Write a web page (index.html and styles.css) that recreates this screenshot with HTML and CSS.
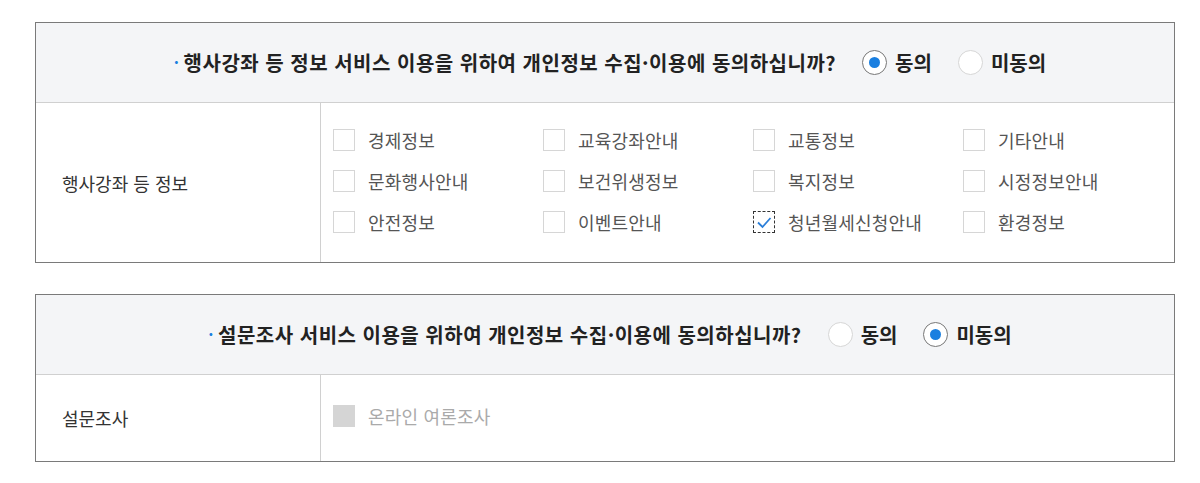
FILE: index.html
```html
<!DOCTYPE html>
<html lang="ko">
<head>
<meta charset="utf-8">
<link rel="stylesheet" href="styles.css">
</head>
<body>
<div class="page">
  <section class="agree">
    <div class="agree-head">
      <p class="question"><span class="dot">·</span>행사강좌 등 정보 서비스 이용을 위하여 개인정보 수집·이용에 동의하십니까?</p>
      <label class="radio"><span class="circle on"></span>동의</label>
      <label class="radio"><span class="circle"></span>미동의</label>
    </div>
    <div class="agree-body">
      <div class="label">행사강좌 등 정보</div>
      <div class="options">
        <label class="check"><span class="box"></span>경제정보</label>
        <label class="check"><span class="box"></span>교육강좌안내</label>
        <label class="check"><span class="box"></span>교통정보</label>
        <label class="check"><span class="box"></span>기타안내</label>
        <label class="check"><span class="box"></span>문화행사안내</label>
        <label class="check"><span class="box"></span>보건위생정보</label>
        <label class="check"><span class="box"></span>복지정보</label>
        <label class="check"><span class="box"></span>시정정보안내</label>
        <label class="check"><span class="box"></span>안전정보</label>
        <label class="check"><span class="box"></span>이벤트안내</label>
        <label class="check"><span class="box checked"><svg viewBox="0 0 22 22" width="22" height="22"><path d="M5 11.5 L9.5 16 L17.5 7" fill="none" stroke="#2b7fd9" stroke-width="1.8"/></svg></span>청년월세신청안내</label>
        <label class="check"><span class="box"></span>환경정보</label>
      </div>
    </div>
  </section>

  <section class="agree">
    <div class="agree-head">
      <p class="question"><span class="dot">·</span>설문조사 서비스 이용을 위하여 개인정보 수집·이용에 동의하십니까?</p>
      <label class="radio"><span class="circle"></span>동의</label>
      <label class="radio"><span class="circle on"></span>미동의</label>
    </div>
    <div class="agree-body short">
      <div class="label">설문조사</div>
      <div class="options single">
        <label class="check disabled"><span class="box"></span>온라인 여론조사</label>
      </div>
    </div>
  </section>
</div>
</body>
</html>
```

FILE: styles.css
```css
* { box-sizing: border-box; }
html, body { margin: 0; padding: 0; background: #fff; }
body {
  font-family: "Noto Sans CJK KR", "Noto Sans", sans-serif;
  color: #333;
}
.page {
  padding: 22px 25px 0 35px;
  width: 1200px;
}
.agree {
  width: 1140px;
  border: 1px solid #7a7a7a;
  margin-bottom: 31px;
}
.agree-head {
  height: 80px;
  background: #f4f5f7;
  border-bottom: 1px solid #d0d0d0;
  display: flex;
  align-items: center;
  justify-content: center;
  padding-left: 10px;
}
.question {
  margin: 0 26px 0 0;
  font-size: 20px;
  font-weight: bold;
  color: #222;
  letter-spacing: 0.5px;
}
.dot {
  color: #1a7fe0;
  margin-right: 4px;
  font-size: 16px;
  position: relative;
  top: -2px;
}
.radio {
  display: flex;
  align-items: center;
  font-size: 20px;
  font-weight: bold;
  color: #222;
  margin-right: 26px;
}
.radio:last-child { margin-right: 0; }
.circle {
  width: 25px;
  height: 25px;
  border-radius: 50%;
  border: 1px solid #d6d6d6;
  background: #fff;
  margin-right: 8px;
  display: flex;
  align-items: center;
  justify-content: center;
}
.circle.on { border-color: #777; }
.circle.on::after {
  content: "";
  width: 11px;
  height: 11px;
  border-radius: 50%;
  background: #1a7fe0;
}
.agree-body {
  display: flex;
  min-height: 159px;
}
.agree-body.short { min-height: 86px; }
.label {
  width: 285px;
  flex: none;
  border-right: 1px solid #d0d0d0;
  display: flex;
  align-items: center;
  padding-left: 26px;
  font-size: 18px;
  color: #333;
}
.options {
  flex: 1;
  display: grid;
  grid-template-columns: repeat(4, 210px);
  row-gap: 19px;
  padding: 26px 0 0 12px;
  align-content: start;
}
.options.single { padding-top: 30px; }
.check {
  display: flex;
  align-items: center;
  height: 22px;
  font-size: 18px;
  color: #555;
  letter-spacing: 0.2px;
}
.box {
  width: 22px;
  height: 22px;
  border: 1px solid #d6d6d6;
  background: #fff;
  margin-right: 13px;
  flex: none;
}
.box.checked {
  border: 1px dashed #333;
  position: relative;
}
.box.checked svg {
  position: absolute;
  left: -1px;
  top: -1px;
}
.check.disabled { color: #aaa; }
.check.disabled .box { background: #d5d5d5; border-color: #d5d5d5; }
```
